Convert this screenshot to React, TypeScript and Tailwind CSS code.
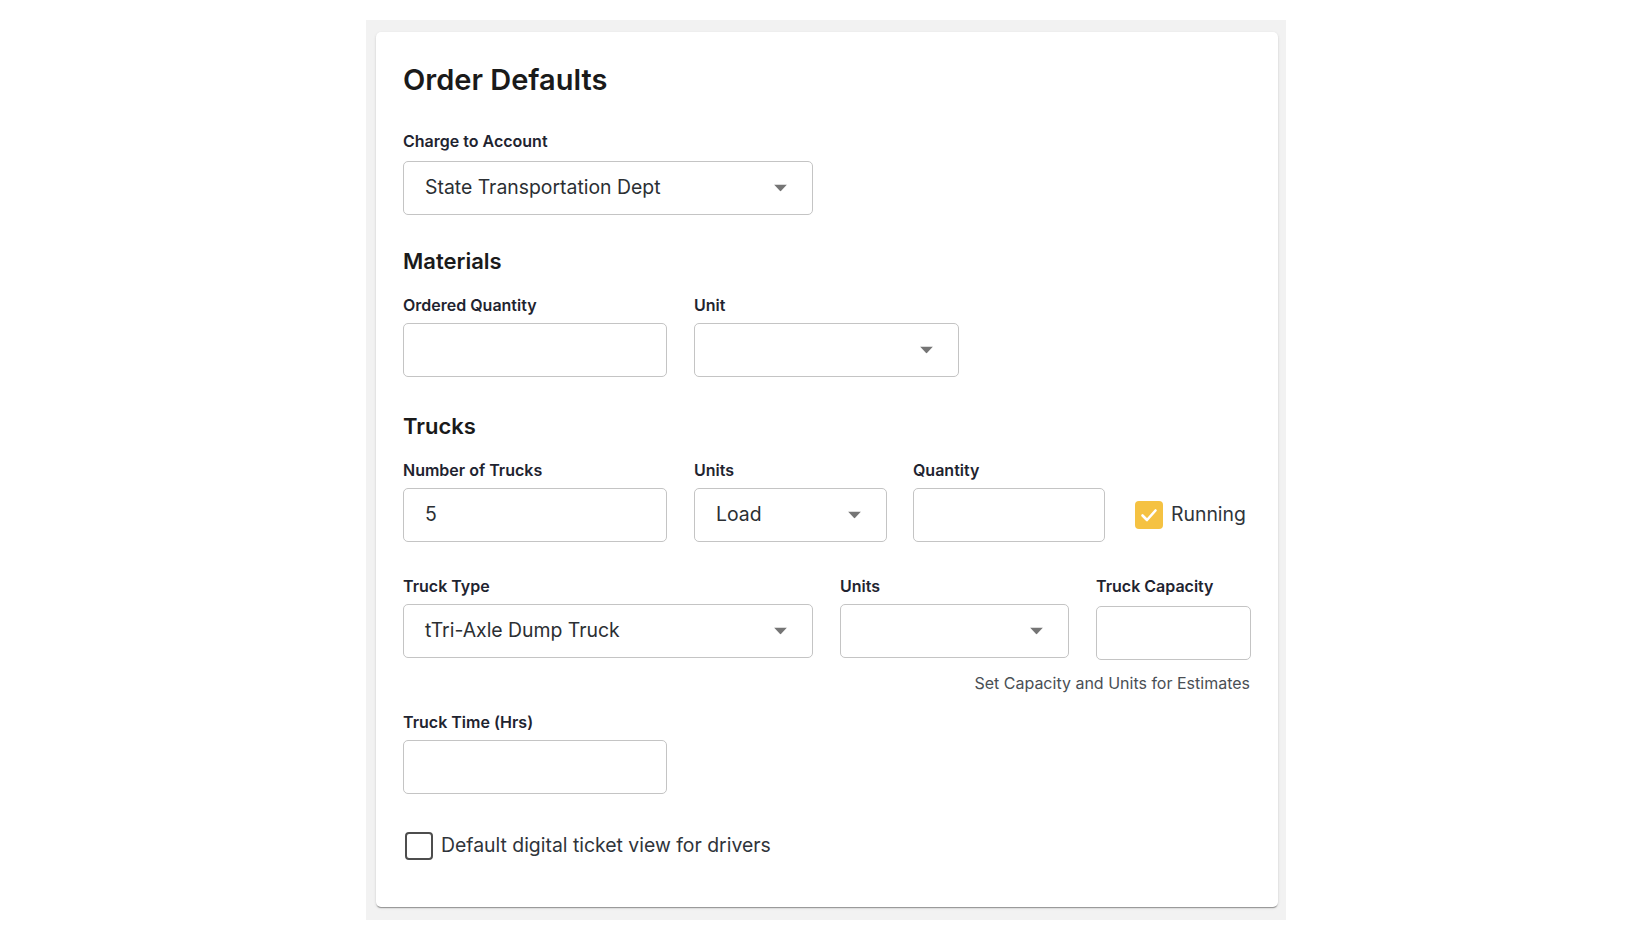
import React from "react";

const font = { fontFamily: "Inter, 'Noto Sans', sans-serif" };

function Arrow() {
  return (
    <svg width="13" height="7" viewBox="0 0 13 7" className="absolute right-[25px] top-1/2 -translate-y-1/2">
      <path d="M0 0 L13 0 L6.5 7 Z" fill="#757575" />
    </svg>
  );
}

function Label({ children, className = "mb-2" }: { children: React.ReactNode; className?: string }) {
  return <div className={`text-[16px] leading-[20px] font-semibold text-[#1f2430] whitespace-nowrap ${className}`}>{children}</div>;
}

function Box({ value, select, w, className = "" }: { value?: string; select?: boolean; w: string; className?: string }) {
  return (
    <div className={`relative h-[54px] ${w} rounded-[5px] border border-[#c4c4c4] bg-white flex items-center pl-[21px] text-[19.4px] text-[#2b2f33] ${className}`}>
      {value}
      {select && <Arrow />}
    </div>
  );
}

function Field({ label, children, labelClass }: { label: string; children: React.ReactNode; labelClass?: string }) {
  return (
    <div className="flex flex-col">
      <Label className={labelClass}>{label}</Label>
      {children}
    </div>
  );
}

export default function App() {
  return (
    <div className="min-h-screen bg-white pt-[20px]" style={font}>
      <div className="mx-auto w-[920px] bg-[#f2f2f2] pt-[12px] pl-[10px] pr-[8px] pb-[13px]">
        <div className="h-[875px] rounded-[5px] bg-white pt-[31px] pl-[27px] pr-[27px] shadow-[0_2px_1px_-1px_rgba(0,0,0,0.25),0_1px_1px_0_rgba(0,0,0,0.12),0_1px_3px_0_rgba(0,0,0,0.12)]">
          <h1 className="text-[29px] leading-[34px] font-semibold text-[#1a1a1a]">Order Defaults</h1>

          <div className="mt-[34px]">
            <Field label="Charge to Account" labelClass="mb-[10px]">
              <Box w="w-[410px]" value="State Transportation Dept" select />
            </Field>
          </div>

          <h2 className="mt-[32px] text-[22px] leading-[28px] font-semibold text-[#1a1a1a]">Materials</h2>
          <div className="mt-[20px] flex gap-[27px]">
            <Field label="Ordered Quantity">
              <Box w="w-[264px]" />
            </Field>
            <Field label="Unit">
              <Box w="w-[265px]" select />
            </Field>
          </div>

          <h2 className="mt-[35px] text-[22px] leading-[28px] font-semibold text-[#1a1a1a]">Trucks</h2>
          <div className="mt-[20px] flex items-end">
            <Field label="Number of Trucks">
              <Box w="w-[264px]" value="5" />
            </Field>
            <div className="ml-[27px]">
              <Field label="Units">
                <Box w="w-[193px]" value="Load" select />
              </Field>
            </div>
            <div className="ml-[26px]">
              <Field label="Quantity">
                <Box w="w-[192px]" />
              </Field>
            </div>
            <div className="ml-[30px] h-[54px] flex items-center gap-[8px]">
              <div className="w-[28px] h-[28px] rounded-[4px] bg-[#f5c242] flex items-center justify-center">
                <svg width="20" height="20" viewBox="0 0 20 20">
                  <path d="M3.5 10.5 L8 15 L16.5 5.5" fill="none" stroke="white" strokeWidth="2.6" strokeLinecap="round" strokeLinejoin="round" />
                </svg>
              </div>
              <span className="text-[19.4px] text-[#2f343a]">Running</span>
            </div>
          </div>

          <div className="mt-[34px] flex items-start">
            <Field label="Truck Type">
              <Box w="w-[410px]" value="tTri-Axle Dump Truck" select />
            </Field>
            <div className="ml-[27px]">
              <Field label="Units">
                <Box w="w-[229px]" select />
              </Field>
            </div>
            <div className="ml-[27px]">
              <Field label="Truck Capacity">
                <Box w="w-[155px]" className="mt-[2px]" />
              </Field>
            </div>
          </div>
          <div className="w-[847px] mt-[13px] text-right text-[16px] leading-[20px] text-[#4a4f55]">
            Set Capacity and Units for Estimates
          </div>

          <div className="mt-[19px]">
            <Field label="Truck Time (Hrs)">
              <Box w="w-[264px]" />
            </Field>
          </div>

          <div className="mt-[37px] ml-[2px] flex items-center gap-[8px]">
            <div className="w-[28px] h-[28px] rounded-[4px] border-2 border-[#4d4d4d] bg-white" />
            <span className="text-[19.4px] text-[#2f343a]">Default digital ticket view for drivers</span>
          </div>
        </div>
      </div>
    </div>
  );
}
